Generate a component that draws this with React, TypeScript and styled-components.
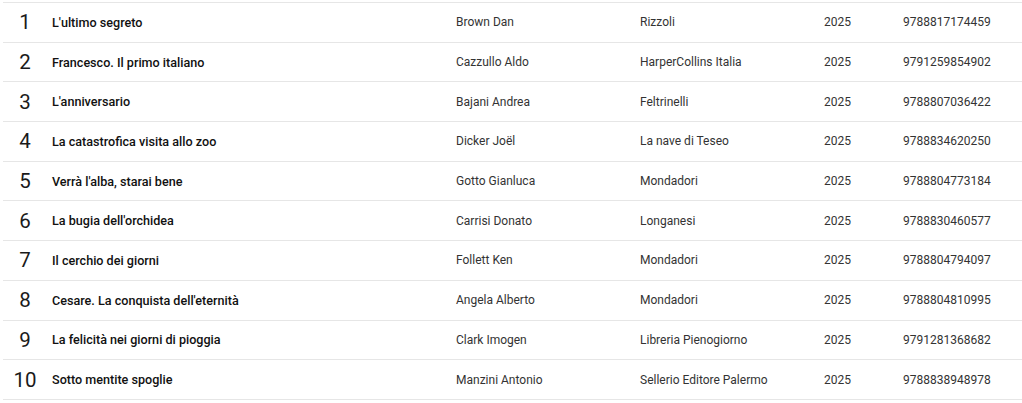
import React from "react";
import styled, { createGlobalStyle } from "styled-components";

const Global = createGlobalStyle`
  html, body { margin: 0; padding: 0; background: #fff; }
  body { font-family: Roboto, "Liberation Sans", Arial, sans-serif; -webkit-font-smoothing: antialiased; }
`;

const Page = styled.div`
  padding: 2px 0 0 3px;
  overflow: hidden;
`;

const Table = styled.div`
  display: flex;
  flex-direction: column;
  border-top: 1px solid #e6e6e6;
  width: 1019px;
`;

const Row = styled.div`
  display: grid;
  grid-template-columns: 44px 409px 184px 184px 79px 1fr;
  align-items: center;
  height: 39.7px;
  box-sizing: border-box;
  border-bottom: 1px solid #e6e6e6;
`;

const Rank = styled.div`
  text-align: center;
  font-size: 20.5px;
  font-weight: 400;
  color: #1a1a1a;
`;

const Cell = styled.div<{ $strong?: boolean; $pad?: number }>`
  padding-left: ${(p) => p.$pad ?? 0}px;
  font-size: ${(p) => (p.$strong ? "12.6px" : "12px")};
  font-weight: ${(p) => (p.$strong ? 500 : 400)};
  color: ${(p) => (p.$strong ? "#111" : "#333")};
  white-space: nowrap;
`;

const books = [
  ["L'ultimo segreto", "Brown Dan", "Rizzoli", "2025", "9788817174459"],
  ["Francesco. Il primo italiano", "Cazzullo Aldo", "HarperCollins Italia", "2025", "9791259854902"],
  ["L'anniversario", "Bajani Andrea", "Feltrinelli", "2025", "9788807036422"],
  ["La catastrofica visita allo zoo", "Dicker Joël", "La nave di Teseo", "2025", "9788834620250"],
  ["Verrà l'alba, starai bene", "Gotto Gianluca", "Mondadori", "2025", "9788804773184"],
  ["La bugia dell'orchidea", "Carrisi Donato", "Longanesi", "2025", "9788830460577"],
  ["Il cerchio dei giorni", "Follett Ken", "Mondadori", "2025", "9788804794097"],
  ["Cesare. La conquista dell'eternità", "Angela Alberto", "Mondadori", "2025", "9788804810995"],
  ["La felicità nei giorni di pioggia", "Clark Imogen", "Libreria Pienogiorno", "2025", "9791281368682"],
  ["Sotto mentite spoglie", "Manzini Antonio", "Sellerio Editore Palermo", "2025", "9788838948978"],
];

export default function App() {
  return (
    <>
      <Global />
      <Page>
        <Table>
          {books.map((b, i) => (
            <Row key={i}>
              <Rank>{i + 1}</Rank>
              <Cell $strong $pad={5}>{b[0]}</Cell>
              <Cell>{b[1]}</Cell>
              <Cell>{b[2]}</Cell>
              <Cell>{b[3]}</Cell>
              <Cell>{b[4]}</Cell>
            </Row>
          ))}
        </Table>
      </Page>
    </>
  );
}
